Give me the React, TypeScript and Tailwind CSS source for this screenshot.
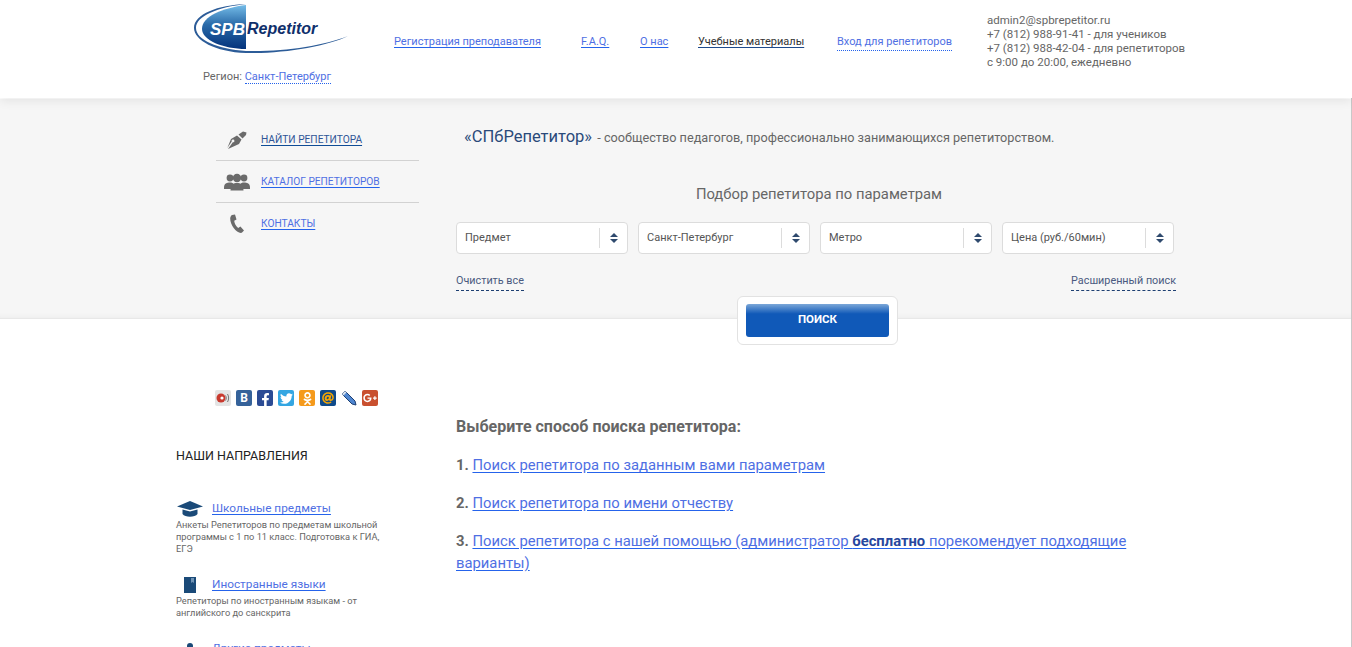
import { FaFacebookF, FaTwitter, FaOdnoklassniki, FaGooglePlusG, FaAt } from "react-icons/fa";

const link = "text-[#4f6fe3] underline decoration-[#2563eb] underline-offset-2";

function Logo() {
  return (
    <svg width="156" height="54" viewBox="0 0 156 54" className="block">
      <defs>
        <linearGradient id="logoFill" x1="0" y1="0" x2="0" y2="1">
          <stop offset="0" stopColor="#74bce8" />
          <stop offset="0.45" stopColor="#2a6aa8" />
          <stop offset="1" stopColor="#04337c" />
        </linearGradient>
      </defs>
      <path d="M53 3 C30 6 9 14 9 27 C9 38 30 47 53 47 Z" fill="url(#logoFill)" />
      <path d="M53 2 C25 3 1 12 1 26 C1 38 22 50 53 51 C90 52 135 44 155 34 C130 44 90 50 53 49 C25 47 3 38 3 26 C3 14 25 5 53 2 Z" fill="#2c5c98" />
      <text x="17" y="33" fontFamily="'Liberation Sans', sans-serif" fontSize="17" fontWeight="700" fontStyle="italic" fill="#fff">SPB</text>
      <text x="54" y="32" fontFamily="'Liberation Sans', sans-serif" fontSize="16" fontWeight="700" fontStyle="italic" fill="#0f2f6b">Repetitor</text>
    </svg>
  );
}

function Header() {
  return (
    <header className="relative z-10 flex h-[98px] bg-white pl-[193px] text-[11px] shadow-[0_3px_10px_rgba(0,0,0,0.08)]">
      <div className="w-[201px] pt-[2px]">
        <Logo />
        <div className="mt-[13px] pl-[10px] leading-[16px] text-[#666]">
          Регион: <span className="border-b border-dotted border-[#2563eb] text-[#4f6fe3]">Санкт-Петербург</span>
        </div>
      </div>
      <nav className="flex h-fit w-[593px] pt-[34px] leading-[16px]">
        <a className={`${link} w-[187px]`}>Регистрация преподавателя</a>
        <a className={`${link} w-[59px]`}>F.A.Q.</a>
        <a className={`${link} w-[58px]`}>О нас</a>
        <a className="w-[139px] text-[#333] underline decoration-[#1d4a8c] underline-offset-2">Учебные материалы</a>
        <span className="border-b border-dotted border-[#2563eb] text-[#4f6fe3]">Вход для репетиторов</span>
      </nav>
      <div className="pt-[13px] text-[11.5px] leading-[14px] text-[#666]">
        <div>admin2@spbrepetitor.ru</div>
        <div>+7 (812) 988-91-41 - для учеников</div>
        <div>+7 (812) 988-42-04 - для репетиторов</div>
        <div>с 9:00 до 20:00, ежедневно</div>
      </div>
    </header>
  );
}

function PenIcon() {
  return (
    <svg width="20" height="18" viewBox="0 0 20 18" fill="#6b6b6b">
      <path d="M11.5 3.5 L16 0.5 L19.5 1.5 L19 4 L15.5 7.5 Z" />
      <path d="M10 4.5 L14.5 8.5 L12 13 L1 18 L5.8 11.3 A1.4 1.4 0 1 0 4.7 10.4 L0.3 17 L4 8 Z" />
    </svg>
  );
}

function PeopleIcon() {
  return (
    <svg width="26" height="18" viewBox="0 0 26 18" fill="#6b6b6b">
      <circle cx="6" cy="5" r="3.4" />
      <circle cx="20" cy="5" r="3.4" />
      <path d="M0 15 C0 10 3 9.5 6 9.5 C8 9.5 9 10 9.5 11 L7 16 L0 16 Z" />
      <path d="M26 15 C26 10 23 9.5 20 9.5 C18 9.5 17 10 16.5 11 L19 16 L26 16 Z" />
      <circle cx="13" cy="5" r="4.2" />
      <path d="M6.5 17.5 C6.5 11.5 9.5 10 13 10 C16.5 10 19.5 11.5 19.5 17.5 Z" />
    </svg>
  );
}

function PhoneIcon() {
  return (
    <svg width="16" height="20" viewBox="0 0 16 20" fill="#6b6b6b">
      <path d="M3 1 L6 0.5 L7.5 5.5 L5.2 6.8 C5.4 9.5 7 12.5 9.2 14 L11.4 12.6 L15 16.5 L12.8 18.8 C8 20 1 11 1.2 4.5 C1.2 3 2 1.6 3 1 Z" />
    </svg>
  );
}

function SideMenu() {
  const rows = [
    { icon: <PenIcon />, label: "НАЙТИ РЕПЕТИТОРА", dark: true },
    { icon: <PeopleIcon />, label: "КАТАЛОГ РЕПЕТИТОРОВ", dark: false },
    { icon: <PhoneIcon />, label: "КОНТАКТЫ", dark: false },
  ];
  return (
    <div className="w-[203px] pt-[20px]">
      {rows.map((r, i) => (
        <div key={r.label} className={`flex h-[42px] items-center border-b pt-[1px] ${i < 2 ? "border-[#d2d2d2]" : "border-transparent"}`}>
          <span className="flex w-[42px] justify-center">{r.icon}</span>
          <a className={`ml-[3px] text-[10.2px] underline underline-offset-2 ${r.dark ? "text-[#2f5597] decoration-[#0f4c96]" : "text-[#4f6fe3] decoration-[#2563eb]"}`}>
            {r.label}
          </a>
        </div>
      ))}
    </div>
  );
}

function FakeSelect({ label }: { label: string }) {
  return (
    <div className="flex h-[32px] w-[172px] items-center rounded-[4px] border border-[#dcdcdc] bg-white text-[11px] text-[#555]">
      <span className="flex-1 pl-[8px]">{label}</span>
      <span className="flex h-[20px] w-[28px] flex-col items-center justify-center gap-[2px] border-l border-[#dcdcdc]">
        <span className="h-0 w-0 border-x-[4px] border-b-[4px] border-x-transparent border-b-[#2f4a6e]" />
        <span className="h-0 w-0 border-x-[4px] border-t-[4px] border-x-transparent border-t-[#2f4a6e]" />
      </span>
    </div>
  );
}

function SearchBand() {
  return (
    <section className="relative flex h-[220px] border-b border-[#e8e8e8] bg-[#f6f6f6] pl-[216px] shadow-[inset_0_-6px_6px_-6px_rgba(0,0,0,0.06)]">
      <SideMenu />
      <div className="ml-[37px] w-[720px]">
        <p className="mt-[25px] pl-[8px] text-[12.7px] leading-[26px] text-[#666]">
          <span className="mr-[2px] text-[16.5px] text-[#2a4a7a]">«СПбРепетитор»</span> - сообщество педагогов, профессионально занимающихся репетиторством.
        </p>
        <h2 className="mt-[33px] pl-[6px] text-center text-[14.8px] leading-[20px] text-[#666]">Подбор репетитора по параметрам</h2>
        <div className="mt-[18px] flex gap-[10px]">
          <FakeSelect label="Предмет" />
          <FakeSelect label="Санкт-Петербург" />
          <FakeSelect label="Метро" />
          <FakeSelect label="Цена (руб./60мин)" />
        </div>
        <div className="mt-[19px] flex w-[720px] justify-between text-[10.8px] leading-[16px] text-[#4a5a80]">
          <span className="border-b border-dashed border-[#1d3f72] pb-[1px]">Очистить все</span>
          <span className="border-b border-dashed border-[#1d3f72] pb-[1px]">Расширенный поиск</span>
        </div>
      </div>
      <div className="absolute left-[737px] top-[197px] z-10 rounded-[6px] border border-[#e2e2e2] bg-white px-[8px] py-[7px]">
        <button className="h-[33px] w-[143px] rounded-[3px] bg-[linear-gradient(#7ba7d8_0%,#1059b8_30%,#1059b8_100%)] pb-[2px] text-[11.5px] font-bold text-white">
          ПОИСК
        </button>
      </div>
    </section>
  );
}

function SocialIcons() {
  const box = "flex h-[16px] w-[16px] items-center justify-center rounded-[2px]";
  return (
    <div className="flex gap-[5px] pl-[39px]">
      <span className={`${box} bg-[#e4e4e4]`}>
        <svg width="14" height="12" viewBox="0 0 14 12" fill="none">
          <circle cx="5" cy="6" r="4.5" fill="#c8392e" />
          <circle cx="6" cy="6" r="1.6" fill="#fff" />
          <path d="M9.5 3.5 C10.5 5 10.5 7 9.5 8.5 M11.5 2 C13 4.5 13 7.5 11.5 10" stroke="#777" />
        </svg>
      </span>
      <span className={`${box} bg-[#35629a] text-[12px] font-bold leading-none text-white`}>В</span>
      <span className={`${box} items-end bg-[#2b4b94] text-white`}><FaFacebookF size={13} /></span>
      <span className={`${box} bg-[#34a6e2] text-white`}><FaTwitter size={13} /></span>
      <span className={`${box} bg-[#f59a1c] text-white`}><FaOdnoklassniki size={13} /></span>
      <span className={`${box} bg-[#0f4a8a] text-[#f7a600]`}><FaAt size={12} /></span>
      <span className="flex h-[16px] w-[16px] items-center justify-center">
        <svg width="16" height="16" viewBox="0 0 16 16">
          <path d="M1 4 L4 1 L14 11 L15 15 L11 14 Z" fill="#4f86d0" stroke="#1d3f72" strokeWidth="1" />
          <path d="M1 4 L4 1 L5.5 2.5 L2.5 5.5 Z" fill="#d8e2ee" />
        </svg>
      </span>
      <span className={`${box} bg-[#c9502f] text-white`}><FaGooglePlusG size={14} /></span>
    </div>
  );
}

function CapIcon() {
  return (
    <svg width="26" height="16" viewBox="0 0 26 16" fill="#1a4a78">
      <path d="M13 0 L26 5.5 L13 9 L0 5.5 Z" />
      <path d="M5.5 8.5 L13 10.5 L20.5 8.5 V13 C18 16.5 8 16.5 5.5 13 Z" />
    </svg>
  );
}

function BookIcon() {
  return (
    <svg width="14" height="16" viewBox="0 0 14 16" fill="#1a4a78">
      <path d="M1 0 H13 V16 H1 Z" />
      <path d="M8 1 H11 V6 L9.5 5 L8 6 Z" fill="#6f93b5" />
    </svg>
  );
}

function Directions() {
  const items = [
    {
      icon: <CapIcon />,
      title: "Школьные предметы",
      desc: "Анкеты Репетиторов по предметам школьной программы с 1 по 11 класс. Подготовка к ГИА, ЕГЭ",
    },
    {
      icon: <BookIcon />,
      title: "Иностранные языки",
      desc: "Репетиторы по иностранным языкам - от английского до санскрита",
    },
    {
      icon: <span className="mt-[-6px] h-[6px] w-[6px] rounded-full bg-[#1a4a78]" />,
      title: "Другие предметы",
      desc: "",
    },
  ];
  return (
    <aside className="w-[280px]">
      <div className="mt-[71px]">
        <SocialIcons />
      </div>
      <h3 className="mt-[41px] text-[12.5px] leading-[18px] text-[#222]">НАШИ НАПРАВЛЕНИЯ</h3>
      <div className="mt-[35px] flex w-[210px] flex-col gap-[21px]">
        {items.map((it) => (
          <div key={it.title}>
            <div className="flex h-[18px] items-center">
              <span className="flex w-[28px] justify-center">{it.icon}</span>
              <a className={`ml-[8px] text-[11.8px] ${link}`}>{it.title}</a>
            </div>
            <p className="mt-[1px] text-[9.25px] leading-[12px] text-[#666]">{it.desc}</p>
          </div>
        ))}
      </div>
    </aside>
  );
}

function SearchWays() {
  return (
    <div className="w-[680px] pt-[96px] text-[14.8px] text-[#666]">
      <h2 className="text-[16px] font-bold leading-[24px]">Выберите способ поиска репетитора:</h2>
      <p className="mt-[15px] leading-[22px]">
        <b>1.</b> <a className={link}>Поиск репетитора по заданным вами параметрам</a>
      </p>
      <p className="mt-[16px] leading-[22px]">
        <b>2.</b> <a className={link}>Поиск репетитора по имени отчеству</a>
      </p>
      <p className="mt-[16px] leading-[22px]">
        <b>3.</b>{" "}
        <a className={link}>
          Поиск репетитора с нашей помощью (администратор <b className="text-[#27479e]">бесплатно</b> порекомендует подходящие варианты)
        </a>
      </p>
    </div>
  );
}

export default function App() {
  return (
    <div className="relative h-[647px] overflow-hidden bg-white font-['Roboto',sans-serif]">
      <Header />
      <div className="h-px bg-white" />
      <SearchBand />
      <main className="flex pl-[176px]">
        <Directions />
        <SearchWays />
      </main>
      <div className="absolute right-0 top-[6px] h-[641px] w-px bg-[#c8c8c8]" />
    </div>
  );
}
